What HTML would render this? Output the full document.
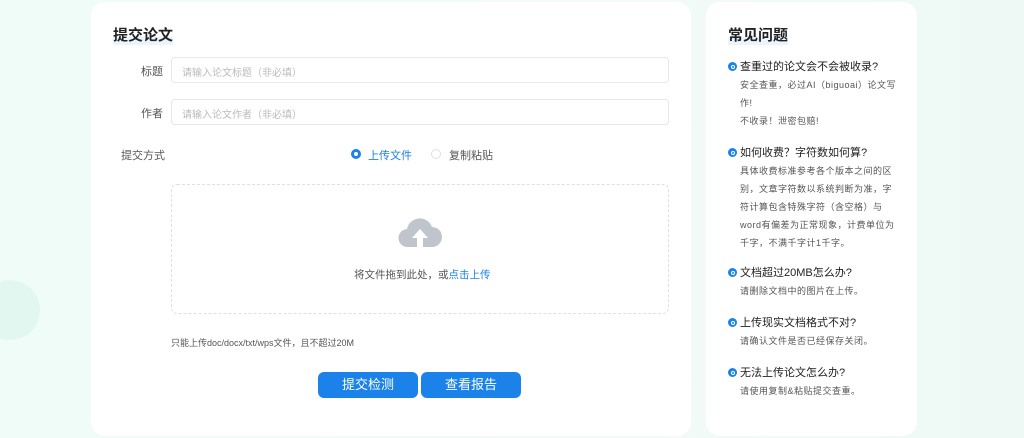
<!DOCTYPE html>
<html><head><meta charset="utf-8"><style>
*{margin:0;padding:0;box-sizing:border-box}
body{width:1024px;height:438px;overflow:hidden;background:linear-gradient(90deg,#effcf7,#f2fbf8 60%,#eef9f5);font-family:"Liberation Sans","Noto Sans CJK SC",sans-serif;position:relative;color:#333}
.card{position:absolute;background:#fff;border-radius:14px}
.abs{position:absolute;white-space:nowrap}
.h{font-size:15px;font-weight:bold;color:#222;background:linear-gradient(transparent 60%,#eaf4fd 60%)}
.lab{font-size:11px;color:#555}
.inp{position:absolute;left:171px;width:498px;height:26px;border:1px solid #e4e7ed;border-radius:4px;font-size:10px;color:#bbb;padding:6px 10px}
.btn{position:absolute;top:372px;width:100px;height:26px;background:#1a82e8;border-radius:6px;color:#fff;font-size:13px;text-align:center;line-height:26px}
.q{font-size:11px;color:#222}
.q i{display:inline-block;width:9px;height:9px;border-radius:50%;background:#1a82e8;margin-right:3px;vertical-align:-1px;position:relative}
.q i:after{content:"";position:absolute;left:2.5px;top:2.5px;width:2px;height:2px;border:1px solid #fff;border-radius:50%}
.a{font-size:9px;color:#555;line-height:18px;letter-spacing:0.5px}
</style></head><body>
<div style="position:absolute;left:-20px;top:280px;width:60px;height:60px;border-radius:50%;background:#e2f7ef"></div>
<div class="card" style="left:91px;top:2px;width:600px;height:434px"></div>
<div class="card" style="left:706px;top:2px;width:211px;height:434px"></div>
<div class="abs h" style="left:113px;top:24px">提交论文</div>
<div class="abs lab" style="left:141px;top:63px">标题</div>
<div class="inp" style="top:57px">请输入论文标题（非必填）</div>
<div class="abs lab" style="left:141px;top:105px">作者</div>
<div class="inp" style="top:99px">请输入论文作者（非必填）</div>
<div class="abs lab" style="left:121px;top:147px">提交方式</div>
<div class="abs" style="left:351px;top:149px;width:10px;height:10px;border-radius:50%;background:#1a82e8"><div style="position:absolute;left:3px;top:3px;width:4px;height:4px;border-radius:50%;background:#fff"></div></div>
<div class="abs" style="left:368px;top:147px;font-size:11px;color:#1a82e8">上传文件</div>
<div class="abs" style="left:431px;top:149px;width:10px;height:10px;border-radius:50%;border:1px solid #dcdfe6"></div>
<div class="abs" style="left:449px;top:147px;font-size:11px;color:#555">复制粘贴</div>
<div class="abs" style="left:171px;top:184px;width:498px;height:130px;border:1px dashed #dcdfe6;border-radius:6px"></div>
<svg class="abs" style="left:398px;top:215px" width="44" height="34" viewBox="0 0 44 34"><path d="M10 32a9 9 0 0 1-1-18A13 13 0 0 1 34 12a10 10 0 0 1 0 20z" fill="#c0c4cc"/><path d="M22 14l-8 9h5v9h6v-9h5z" fill="#fff"/></svg>
<div class="abs" style="left:354px;top:267px;font-size:10.5px;color:#555">将文件拖到此处，或<span style="color:#1a82e8">点击上传</span></div>
<div class="abs" style="left:171px;top:336px;font-size:9px;color:#555">只能上传doc/docx/txt/wps文件，且不超过20M</div>
<div class="btn" style="left:318px">提交检测</div>
<div class="btn" style="left:421px">查看报告</div>
<div class="abs h" style="left:728px;top:24px">常见问题</div>
<div class="abs q" style="left:728px;top:58px"><i></i>查重过的论文会不会被收录?</div>
<div class="abs a" style="left:740px;top:76px">安全查重，必过AI（biguoai）论文写<br>作!<br>不收录！泄密包赔!</div>
<div class="abs q" style="left:728px;top:144px"><i></i>如何收费？字符数如何算?</div>
<div class="abs a" style="left:740px;top:162px">具体收费标准参考各个版本之间的区<br>别，文章字符数以系统判断为准，字<br>符计算包含特殊字符（含空格）与<br>word有偏差为正常现象，计费单位为<br>千字，不满千字计1千字。</div>
<div class="abs q" style="left:728px;top:264px"><i></i>文档超过20MB怎么办?</div>
<div class="abs a" style="left:740px;top:282px">请删除文档中的图片在上传。</div>
<div class="abs q" style="left:728px;top:314px"><i></i>上传现实文档格式不对?</div>
<div class="abs a" style="left:740px;top:332px">请确认文件是否已经保存关闭。</div>
<div class="abs q" style="left:728px;top:364px"><i></i>无法上传论文怎么办?</div>
<div class="abs a" style="left:740px;top:382px">请使用复制&amp;粘贴提交查重。</div>
</body></html>
